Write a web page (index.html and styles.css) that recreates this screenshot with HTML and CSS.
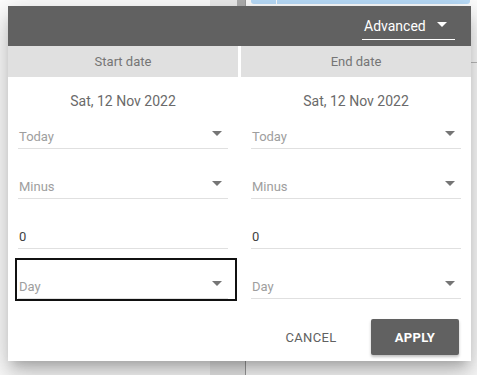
FILE: index.html
```html
<!DOCTYPE html>
<html>
<head>
  <link rel="stylesheet" href="styles.css">
</head>
<body>
  <div class="page">
    <div class="page-strip"><div class="page-thumb"></div></div>
    <div class="page-bar"><div class="page-bar-cell"></div><div class="page-bar-cell wide"></div></div>
    <div class="page-rule"></div>
  </div>

  <div class="dialog">
    <div class="dialog-header">
      <div class="mode-select">
        <span>Advanced</span>
        <span class="arrow white"></span>
      </div>
    </div>

    <div class="tabs">
      <div class="tab">Start date</div>
      <div class="tab">End date</div>
    </div>

    <div class="columns">
      <div class="column">
        <div class="date">Sat, 12 Nov 2022</div>
        <div class="field first"><span class="placeholder">Today</span><span class="arrow"></span></div>
        <div class="field"><span class="placeholder">Minus</span><span class="arrow"></span></div>
        <div class="field"><span class="value">0</span></div>
        <div class="field focused"><span class="placeholder">Day</span><span class="arrow"></span></div>
      </div>
      <div class="column">
        <div class="date">Sat, 12 Nov 2022</div>
        <div class="field first"><span class="placeholder">Today</span><span class="arrow"></span></div>
        <div class="field"><span class="placeholder">Minus</span><span class="arrow"></span></div>
        <div class="field"><span class="value">0</span></div>
        <div class="field"><span class="placeholder">Day</span><span class="arrow"></span></div>
      </div>
    </div>

    <div class="actions">
      <button class="btn">CANCEL</button>
      <button class="btn primary">APPLY</button>
    </div>
  </div>
</body>
</html>
```

FILE: styles.css
```css
body {
  margin: 0;
  width: 477px;
  height: 375px;
  overflow: hidden;
  background: #fff;
  font-family: Roboto, "Liberation Sans", Arial, sans-serif;
  position: relative;
}

/* Page behind the dialog */
.page-strip {
  position: absolute;
  left: 210px;
  top: 0;
  width: 35px;
  height: 375px;
  background: #eeeeee;
  border-right: 1px solid #9e9e9e;
}

.page-thumb {
  margin-left: 27px;
  width: 8px;
  height: 20px;
  background: #b0b0b0;
}

.page-bar {
  position: absolute;
  left: 251px;
  top: 0;
  width: 219px;
  height: 4px;
  display: flex;
  gap: 1px;
}

.page-bar-cell {
  width: 25px;
  background: #bbdefb;
  border-radius: 0 0 0 3px;
}

.page-bar-cell.wide {
  flex: 1;
  border-radius: 0 0 3px 0;
}

.page-rule {
  position: absolute;
  left: 465px;
  top: 62px;
  width: 12px;
  height: 1px;
  background: #bdbdbd;
}

/* Dialog */
.dialog {
  position: absolute;
  left: 8px;
  top: 6px;
  width: 463px;
  height: 355px;
  background: #fff;
  display: flex;
  flex-direction: column;
  box-shadow: 0 8px 10px -5px rgba(0,0,0,0.2), 0 16px 24px 2px rgba(0,0,0,0.14), 0 6px 30px 5px rgba(0,0,0,0.12);
}

.dialog-header {
  height: 40px;
  background: #616161;
  display: flex;
  justify-content: flex-end;
  padding-right: 16px;
}

.mode-select {
  width: 93px;
  height: 34px;
  box-sizing: border-box;
  border-bottom: 1px solid #fff;
  display: flex;
  align-items: center;
  justify-content: space-between;
  padding: 6px 8px 0 2px;
  color: #fff;
  font-size: 14px;
}

.arrow {
  width: 0;
  height: 0;
  border-left: 5px solid transparent;
  border-right: 5px solid transparent;
  border-top: 5px solid #757575;
  margin-bottom: 6px;
}

.arrow.white {
  border-top-color: #fff;
  margin-bottom: 2px;
}

.tabs {
  display: flex;
  gap: 3px;
  height: 31px;
}

.tab {
  flex: 1;
  background: #e0e0e0;
  color: #757575;
  font-size: 13px;
  display: flex;
  align-items: center;
  justify-content: center;
  padding-bottom: 1px;
}

.columns {
  display: flex;
  gap: 3px;
}

.column {
  flex: 1;
  padding: 0 10px;
}

.date {
  margin-top: 14px;
  line-height: 20px;
  text-align: center;
  color: #6a6a6a;
  font-size: 14px;
}

.field {
  position: relative;
  height: 24px;
  margin-top: 25px;
  border-bottom: 1px solid #e0e0e0;
  display: flex;
  align-items: center;
  justify-content: space-between;
  padding: 0 6px 0 1px;
  font-size: 13px;
}

.field.first {
  margin-top: 13px;
}

.placeholder {
  color: #9e9e9e;
}

.value {
  color: #424242;
}

.field.focused::after {
  content: '';
  position: absolute;
  left: -3px;
  right: -9px;
  top: -16px;
  bottom: -3px;
  border: 2px solid #111;
}

.actions {
  display: flex;
  justify-content: flex-end;
  gap: 16px;
  margin-top: auto;
  padding: 0 12px 6px;
}

.btn {
  width: 88px;
  height: 36px;
  border: none;
  border-radius: 2px;
  background: transparent;
  color: #616161;
  font-family: Roboto, "Liberation Sans", Arial, sans-serif;
  font-size: 13px;
  letter-spacing: 0.3px;
}

.btn.primary {
  background: #616161;
  color: #fff;
  font-weight: bold;
  box-shadow: 0 2px 3px rgba(0,0,0,0.25);
}
```
